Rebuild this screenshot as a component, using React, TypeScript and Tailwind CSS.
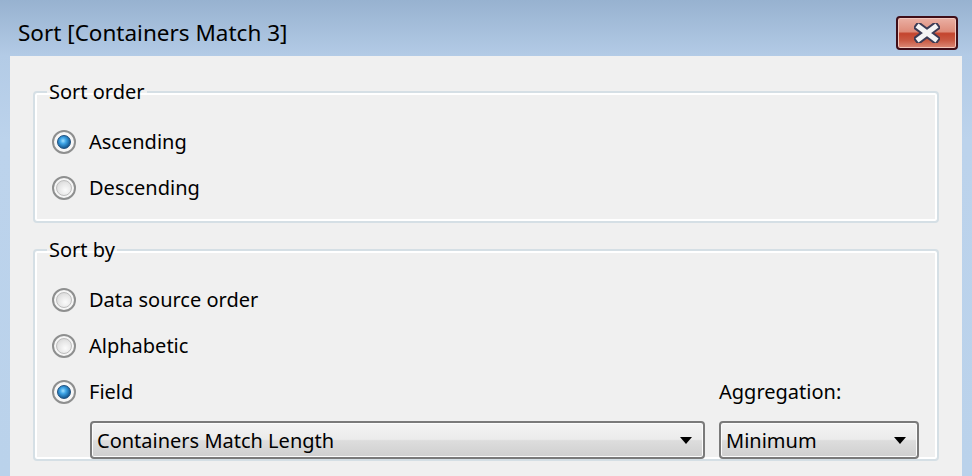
import { ReactNode } from 'react';

const Radio = ({ checked = false }: { checked?: boolean }) => (
  <span className="flex h-[24px] w-[24px] shrink-0 items-center justify-center rounded-full border-2 border-[#8e8f8f] bg-[#f6f6f6]">
    {checked ? (
      <span className="h-[14px] w-[14px] rounded-full border border-[#1d4f7e] bg-[radial-gradient(circle_at_42%_40%,#9fe0ff_0%,#3ea4e6_30%,#11558f_75%,#0b3a66_100%)]" />
    ) : (
      <span className="h-[16px] w-[16px] rounded-full border border-[#bdbdbd] bg-[radial-gradient(circle_at_60%_65%,#fbfbfb_0%,#e6e6e6_55%,#cfcfcf_100%)]" />
    )}
  </span>
);

const Option = ({ label, checked }: { label: string; checked?: boolean }) => (
  <label className="flex h-[46px] items-center gap-[13px]">
    <Radio checked={checked} />
    <span>{label}</span>
  </label>
);

const GroupBox = ({ title, children }: { title: string; children: ReactNode }) => (
  <fieldset className="rounded-[4px] border-2 border-[#d5dfe5] pl-[17px] pr-[18px] shadow-[inset_0_0_0_2px_#ffffff]">
    <legend className="-ml-[5px] px-[2px] leading-[26px]">{title}</legend>
    {children}
  </fieldset>
);

const Select = ({ value, className }: { value: string; className: string }) => (
  <div
    className={`flex h-[38px] items-center justify-between rounded-[4px] border-2 border-[#7a7a7a] bg-[linear-gradient(to_bottom,#f3f3f3_0%,#ebebeb_48%,#dddddd_52%,#cfcfcf_100%)] pl-[5px] pr-[11px] shadow-[inset_0_0_0_1px_#fbfbfb] ${className}`}
  >
    <span className="pt-[2px] leading-none">{value}</span>
    <svg width="12" height="7" viewBox="0 0 12 7">
      <path d="M0 0h12L6 7z" fill="#000" />
    </svg>
  </div>
);

const CloseButton = () => (
  <button className="flex h-[34px] w-[62px] items-center justify-center rounded-[4px] border-2 border-[#3f0e18] bg-[linear-gradient(to_bottom,#eab0a4_0%,#de8c7a_45%,#c4452e_52%,#c95a44_75%,#dd8a78_100%)] shadow-[inset_0_0_0_1px_#f2c6bc]">
    <svg width="26" height="20" viewBox="0 0 26 20">
      <path d="M5 4l16 12M21 4L5 16" stroke="#3b3b55" strokeWidth="9" strokeLinecap="square" />
      <path d="M5 4l16 12M21 4L5 16" stroke="#f4f4f4" strokeWidth="5" strokeLinecap="square" />
    </svg>
  </button>
);

export default function App() {
  return (
    <div
      className="flex h-[476px] w-[972px] flex-col overflow-hidden bg-[linear-gradient(to_bottom,#97b2d0_0px,#b3cbe6_56px,#bcd3ec_140px,#bad2eb_476px)] text-[20px] text-black"
      style={{ fontFamily: '"Noto Sans", "Open Sans", sans-serif' }}
    >
      <div className="flex h-[56px] items-center pl-[18px] pr-[14px] pt-[10px]">
        <span className="text-[22.5px] leading-[26px] text-[#000]">Sort [Containers Match 3]</span>
        <div className="ml-auto">
          <CloseButton />
        </div>
      </div>
      <div className="flex flex-1 px-[10px]">
        <div className="flex flex-1 flex-col gap-[14px] bg-[#f0f0f0] px-[23px] pt-[23px]">
          <GroupBox title="Sort order">
            <div className="pb-[10px] pt-[14px]">
              <Option label="Ascending" checked />
              <Option label="Descending" />
            </div>
          </GroupBox>
          <GroupBox title="Sort by">
            <div className="pt-[14px]">
              <Option label="Data source order" />
              <Option label="Alphabetic" />
              <div className="flex items-center justify-between">
                <Option label="Field" checked />
                <span className="w-[200px]">Aggregation:</span>
              </div>
              <div className="mt-[6px] flex gap-[14px] pl-[38px]">
                <Select value="Containers Match Length" className="flex-1" />
                <Select value="Minimum" className="w-[200px]" />
              </div>
            </div>
          </GroupBox>
        </div>
      </div>
    </div>
  );
}
